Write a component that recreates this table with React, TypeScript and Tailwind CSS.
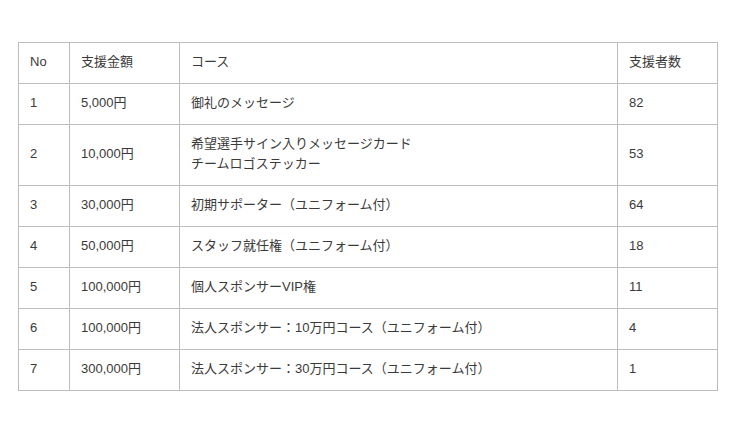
import React from "react";

const rows: [string, string, string[], string][] = [
  ["1", "5,000円", ["御礼のメッセージ"], "82"],
  ["2", "10,000円", ["希望選手サイン入りメッセージカード", "チームロゴステッカー"], "53"],
  ["3", "30,000円", ["初期サポーター（ユニフォーム付）"], "64"],
  ["4", "50,000円", ["スタッフ就任権（ユニフォーム付）"], "18"],
  ["5", "100,000円", ["個人スポンサーVIP権"], "11"],
  ["6", "100,000円", ["法人スポンサー：10万円コース（ユニフォーム付）"], "4"],
  ["7", "300,000円", ["法人スポンサー：30万円コース（ユニフォーム付）"], "1"],
];

const cell = "border border-[#bdbdbd] px-[11px] pt-[9px] pb-[11px] align-middle text-left font-normal";

export default function App() {
  return (
    <div
      className="w-[740px] h-[431px] bg-white pt-[42px] pl-[18px] text-[13px] leading-[20px] text-[#3a3a3a]"
      style={{ fontFamily: '"Liberation Sans", Arial, "Noto Sans CJK JP", sans-serif' }}
    >
      <table className="border-collapse w-[699px] table-fixed">
        <colgroup>
          <col className="w-[51px]" />
          <col className="w-[110px]" />
          <col className="w-[438px]" />
          <col className="w-[100px]" />
        </colgroup>
        <thead>
          <tr>
            <th className={cell}>No</th>
            <th className={cell}>支援金額</th>
            <th className={cell}>コース</th>
            <th className={cell}>支援者数</th>
          </tr>
        </thead>
        <tbody>
          {rows.map((r) => (
            <tr key={r[0]}>
              <td className={cell}>{r[0]}</td>
              <td className={cell}>{r[1]}</td>
              <td className={cell}>
                {r[2].map((l, i) => (
                  <div key={i}>{l}</div>
                ))}
              </td>
              <td className={cell}>{r[3]}</td>
            </tr>
          ))}
        </tbody>
      </table>
    </div>
  );
}
